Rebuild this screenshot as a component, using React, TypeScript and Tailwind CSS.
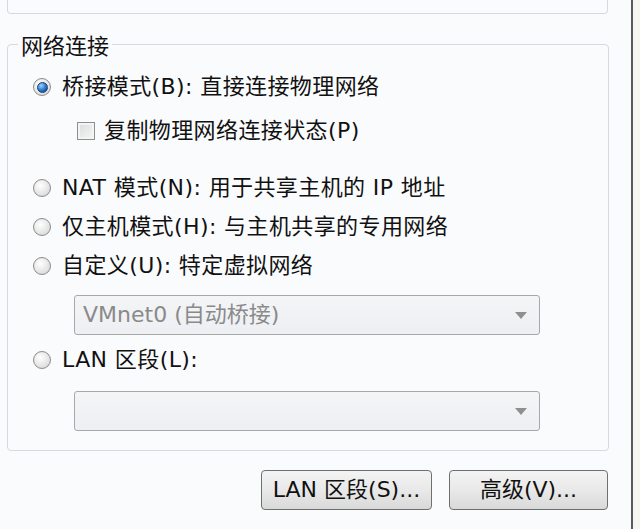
import React from "react";

const font = "font-['DejaVu_Sans','Noto_Sans_CJK_SC',sans-serif]";

function Radio({ checked }: { checked?: boolean }) {
	return (
		<span className="flex h-[18px] w-[18px] shrink-0 items-center justify-center rounded-full border border-[#8c8c8c] bg-[radial-gradient(circle_at_40%_35%,#ffffff,#e4e4e4_60%,#cfcfcf)]">
			{checked && (
				<span className="h-[11px] w-[11px] rounded-full border border-[#1b3f6b] bg-[radial-gradient(circle_at_35%_30%,#9fd3ff,#2c7bd0_50%,#0e3d78)]" />
			)}
		</span>
	);
}

function Option({ label, checked, className }: { label: string; checked?: boolean; className: string }) {
	return (
		<div className={`flex h-6 items-center gap-[11px] ${className}`}>
			<Radio checked={checked} />
			<span className="tracking-[0.4px]">{label}</span>
		</div>
	);
}

function Select({ value, className }: { value?: string; className: string }) {
	return (
		<div
			className={`ml-[41px] flex h-10 w-[466px] items-center justify-between rounded-[3px] border border-[#a8a8a8] bg-gradient-to-b from-[#f4f5f7] to-[#eeeff2] pl-2 pr-3 ${className}`}
		>
			<span className="text-[#8a8a8a]">{value}</span>
			<svg width="12" height="7" viewBox="0 0 12 7" className="mt-[1px]">
				<polygon points="0,0 12,0 6,7" fill="#8f8f8f" />
			</svg>
		</div>
	);
}

export default function App() {
	return (
		<div className={`flex h-[529px] w-[640px] overflow-hidden bg-[#fafbfd] text-[22px] leading-6 text-[#111] ${font}`}>
			<div className="flex w-[631px] flex-col pl-[7px]">
				<div className="h-[14px] w-[601px] rounded-b-[4px] border-x border-b border-[#d6dadf]" />

				<fieldset className="mt-[17px] w-[602px] rounded-[4px] border border-[#d6dadf] pb-[19px]">
					<legend className="ml-[10px] px-[3px] font-['Noto_Sans_CJK_SC',sans-serif] text-[22px] leading-[26px]">
						网络连接
					</legend>

					<div className="flex flex-col pl-[25px]">
						<Option className="mt-[18px]" checked label="桥接模式(B): 直接连接物理网络" />

						<div className="mt-[20px] flex h-6 items-center gap-[9px] pl-[44px]">
							<span className="h-[18px] w-[18px] shrink-0 border border-[#8e8f8f] bg-gradient-to-br from-[#dcdcdc] to-[#f6f6f6] shadow-[inset_0_0_0_2px_#f4f4f4]" />
							<span className="tracking-[0.4px]">复制物理网络连接状态(P)</span>
						</div>

						<Option className="mt-[33px]" label="NAT 模式(N): 用于共享主机的 IP 地址" />
						<Option className="mt-[15px]" label="仅主机模式(H): 与主机共享的专用网络" />
						<Option className="mt-[15px]" label="自定义(U): 特定虚拟网络" />

						<Select className="mt-[17px]" value="VMnet0 (自动桥接)" />

						<Option className="mt-[13px]" label="LAN 区段(L):" />

						<Select className="mt-[19px]" />
					</div>
				</fieldset>

				<div className="mt-[19px] flex w-[601px] justify-end gap-[17px]">
					<button className="h-10 w-[171px] rounded-[4px] border border-[#6f6f6f] bg-gradient-to-b from-[#f3f3f3] via-[#e9e9e9] to-[#d9d9d9]">
						LAN 区段(S)...
					</button>
					<button className="h-10 w-[159px] rounded-[4px] border border-[#6f6f6f] bg-gradient-to-b from-[#f3f3f3] via-[#e9e9e9] to-[#d9d9d9]">
						高级(V)...
					</button>
				</div>
			</div>
			<div className="w-[2px] bg-[#5a5a5f]" />
			<div className="flex-1 bg-[#f7f7f2]" />
		</div>
	);
}
